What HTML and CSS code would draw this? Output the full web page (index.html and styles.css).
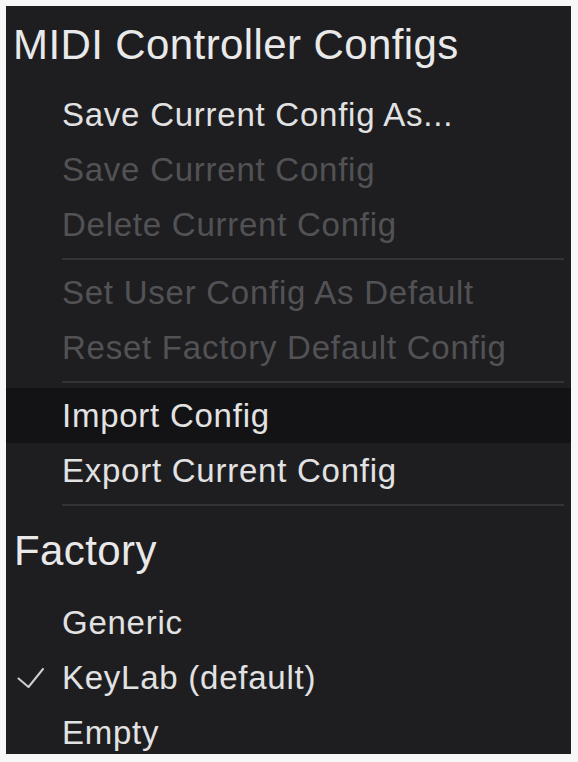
FILE: index.html
```html
<!DOCTYPE html>
<html lang="en">
<head>
<meta charset="utf-8">
<title>MIDI Controller Configs</title>
<link rel="stylesheet" href="styles.css">
</head>
<body>
<div class="menu">
  <div class="heading title">MIDI Controller Configs</div>
  <div class="item"><span class="gutter"></span><span class="label">Save Current Config As...</span></div>
  <div class="item disabled"><span class="gutter"></span><span class="label">Save Current Config</span></div>
  <div class="item disabled"><span class="gutter"></span><span class="label">Delete Current Config</span></div>
  <div class="sep"></div>
  <div class="item disabled"><span class="gutter"></span><span class="label">Set User Config As Default</span></div>
  <div class="item disabled"><span class="gutter"></span><span class="label">Reset Factory Default Config</span></div>
  <div class="sep"></div>
  <div class="item hover"><span class="gutter"></span><span class="label">Import Config</span></div>
  <div class="item"><span class="gutter"></span><span class="label">Export Current Config</span></div>
  <div class="sep"></div>
  <div class="heading section">Factory</div>
  <div class="item"><span class="gutter"></span><span class="label">Generic</span></div>
  <div class="item checked"><span class="gutter"><svg class="check" width="27" height="20" viewBox="0 0 27 20"><path d="M1.5 10.5 L11.5 19 L26 1" fill="none" stroke="#cfcfd1" stroke-width="2" stroke-linecap="round" stroke-linejoin="round"/></svg></span><span class="label">KeyLab (default)</span></div>
  <div class="item"><span class="gutter"></span><span class="label">Empty</span></div>
</div>
</body>
</html>
```

FILE: styles.css
```css
html, body {
  margin: 0;
  padding: 0;
  background: #f7f7f7;
}

body {
  padding: 6px 7px 8px 6px;
  font-family: "Liberation Sans", Arial, sans-serif;
}

.menu {
  width: 565px;
  height: 748px;
  background: #1e1e21;
  overflow: hidden;
  display: flex;
  flex-direction: column;
}

.heading {
  color: #e9e9ea;
  font-size: 42px;
  letter-spacing: 0.4px;
  white-space: nowrap;
}

.title {
  line-height: 78px;
  padding: 0 0 3px 7px;
  flex: none;
}

.section {
  line-height: 80px;
  padding: 0 0 4px 8px;
  flex: none;
}

.item {
  display: flex;
  align-items: center;
  height: 55px;
  flex: none;
  font-size: 33px;
  letter-spacing: 0.75px;
  color: #e2e2e3;
  white-space: nowrap;
}

.item.disabled {
  color: #525255;
}

.item.hover {
  background: #131315;
}

.gutter {
  width: 56px;
  flex: none;
  display: flex;
  align-items: center;
  padding-left: 11px;
  box-sizing: border-box;
}

.check {
  display: block;
}

.sep {
  flex: none;
  height: 2px;
  margin: 6px 7px 5px 56px;
  background: #343438;
}
```
